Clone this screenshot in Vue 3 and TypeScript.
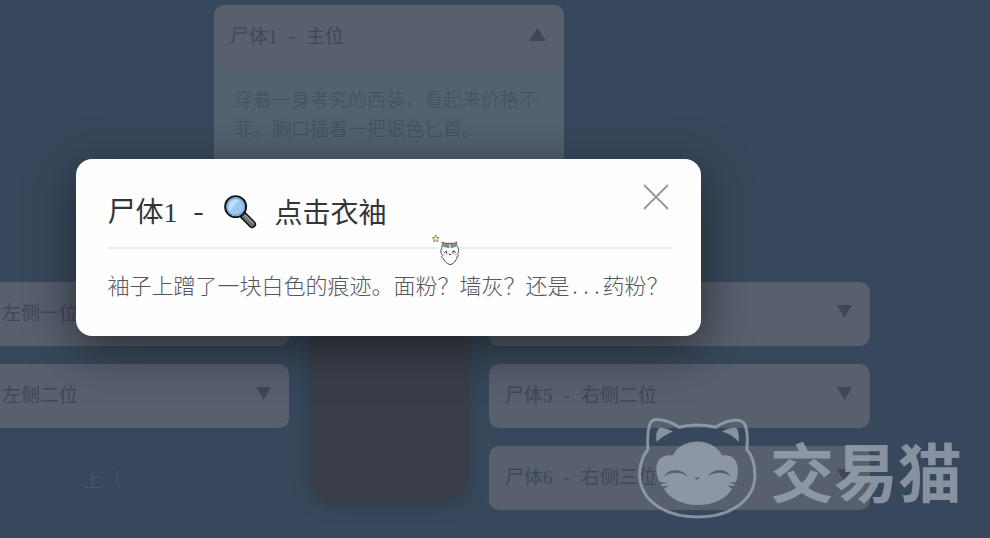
<script setup lang="ts">
import { ref } from 'vue'

interface Seat {
  id: number
  name: string
}

const leftSeats: Seat[] = [
  { id: 2, name: '左侧一位' },
  { id: 3, name: '左侧二位' },
]
const rightSeats: Seat[] = [
  { id: 4, name: '右侧一位' },
  { id: 5, name: '右侧二位' },
  { id: 6, name: '右侧三位' },
]
const open = ref(true)
</script>

<template>
  <div class="page">
    <main class="scene">
      <section class="card head-seat">
        <button class="seat" type="button">
          <span>尸体<span class="num">1</span> - 主位</span>
          <svg class="arrow" viewBox="0 0 18 14" aria-hidden="true"><path d="M9 0 18 14H0Z" /></svg>
        </button>
        <p class="detail">穿着一身考究的西装，看起来价格不菲。胸口插着一把银色匕首。</p>
      </section>

      <div class="room">
        <div class="column left">
          <section v-for="seat in leftSeats" :key="seat.id" class="card">
            <button class="seat" type="button">
              <span>尸体<span class="num">{{ seat.id }}</span> - {{ seat.name }}</span>
              <svg class="arrow small" viewBox="0 0 16 14" aria-hidden="true"><path d="M0 0H16L8 14Z" /></svg>
            </button>
          </section>
          <p class="hint">上（</p>
        </div>
        <div class="table-top"></div>
        <div class="column">
          <section v-for="seat in rightSeats" :key="seat.id" class="card">
            <button class="seat" type="button">
              <span>尸体<span class="num">{{ seat.id }}</span> - {{ seat.name }}</span>
              <svg class="arrow small" viewBox="0 0 16 14" aria-hidden="true"><path d="M0 0H16L8 14Z" /></svg>
            </button>
          </section>
        </div>
      </div>
    </main>

    <div v-if="open" class="overlay">
      <div class="modal" role="dialog" aria-labelledby="clue-title">
        <h2 id="clue-title" class="title">
          <span>尸体<span class="num">1</span> -</span>
          <svg class="lens" viewBox="0 0 36 36" aria-hidden="true">
            <path d="M20 21 30 31" stroke="#111317" stroke-width="8" stroke-linecap="round" />
            <path d="M22 23 30 31" stroke="#6e7074" stroke-width="5" stroke-linecap="round" />
            <path d="M23 22 31 30" stroke="#929499" stroke-width="1.5" stroke-linecap="round" />
            <circle cx="13" cy="13" r="10.8" fill="#9dc9ee" stroke="#111317" stroke-width="2" />
            <circle cx="13" cy="13" r="9" fill="none" stroke="#719dc4" stroke-width="1.2" />
            <path d="M6 15A8 8 0 0 1 16 6L7 18Z" fill="#bfdef7" />
          </svg>
          <span>点击衣袖</span>
        </h2>
        <p class="clue">袖子上蹭了一块白色的痕迹。面粉？墙灰？还是...药粉？</p>
        <button class="close" type="button" aria-label="关闭" @click="open = false">
          <svg viewBox="0 0 26 26" aria-hidden="true"><path d="M1 1 25 25M25 1 1 25" /></svg>
        </button>
      </div>
    </div>

    <svg class="pointer" viewBox="0 0 87 99" aria-hidden="true">
      <path d="M26 34H87V60L72 99H46L26 68Z" fill="#fefefe" />
      <path d="M17 9 20 16 27 17 22 22 24 29 17 26 11 29 12 22 7 17 14 16Z" fill="#fbf5a5" stroke="#77734a" stroke-width="2.4" />
      <path d="M36 48C34 46 35 42 37 40L37 30 45 34H73L80 30V40C87 49 87 61 82 68L86 71 80 75 81 80C77 83 75 91 68 95L60 98 52 94C46 90 42 85 40 80L34 74 38 70C31 64 31 55 36 48Z" fill="#fff" stroke="#3b3d42" stroke-width="2.8" />
      <path d="M37 31 45 36H54V48L36 44ZM64 36H72L80 31V44L66 48Z" fill="#819494" />
      <path d="M55 36V48M60 36V47M65 36V48" stroke="#657a79" stroke-width="3" />
      <path d="M43 62 49 57M50 58V65M67 58 73 57 77 62M69 58V65M56 66 60 69 64 66" fill="none" stroke="#303237" stroke-width="3" />
      <path d="M38 68H47M73 67H82" stroke="#f1b8c3" stroke-width="4" />
    </svg>

    <div class="watermark">
      <svg viewBox="20 34 364 310" aria-hidden="true">
        <path
          class="outline"
          d="M53 131C51 102 52 75 59 55 63 43 77 40 94 43 114 46 131 54 147 65 181 56 223 56 257 65 278 50 301 42 323 44 341 45 346 55 349 71 353 91 353 110 350 131 368 151 375 178 375 211 373 286 300 335 203 335 107 335 31 288 28 211 27 180 35 154 53 131Z"
        />
        <path class="fill" d="M79 109C76 92 78 76 87 67 98 65 114 71 128 78 108 86 91 97 79 109ZM276 78C290 70 306 65 319 67 326 77 328 93 326 109 312 94 296 84 276 78Z" />
        <path
          class="fill"
          fill-rule="evenodd"
          d="M127 150C142 123 168 108 202 108 237 108 262 124 276 150 303 145 320 160 323 185 325 202 322 216 318 230L294 233 314 236 311 242 292 240 306 250C288 281 250 299 203 299 158 299 119 281 101 250L117 240 96 243 91 236 113 233 88 229C77 207 75 185 82 170 90 154 106 147 127 150ZM102 213C122 199 151 198 172 213 161 190 113 186 102 213ZM234 213C254 198 283 199 301 213 289 186 247 189 234 213ZM191 216 201 223 211 216Z"
        />
      </svg>
      <span>交易猫</span>
    </div>
  </div>
</template>

<style>
body {
  margin: 0;
  background: #38485c;
}
</style>

<style scoped>
.page {
  position: relative;
  min-height: 100vh;
  box-sizing: border-box;
  padding-top: 5px;
  overflow: hidden;
  background: #38485c;
  font-family: 'Noto Sans CJK SC', 'Liberation Serif', serif;
  font-weight: 300;
  font-feature-settings: 'hwid';
}
.num {
  font-family: 'Liberation Serif', serif;
  font-weight: 400;
}
.scene {
  margin: 0 120px 0 -92px;
}
.card {
  border-radius: 10px;
  background: #585f6d;
  overflow: hidden;
}
.head-seat {
  width: 350px;
  height: 165px;
  margin: 0 auto;
  background: #526270;
}
.seat {
  display: flex;
  align-items: center;
  justify-content: space-between;
  width: 100%;
  height: 64px;
  padding: 0 18px 6px 16px;
  border: 0;
  background: #585f6d;
  color: #414758;
  font: inherit;
  font-size: 19px;
  font-weight: 400;
  font-feature-settings: inherit;
}
.left .seat {
  padding-left: 18px;
}
.arrow {
  width: 17px;
  height: 13px;
  fill: #444457;
}
.arrow.small {
  width: 15px;
}
.detail {
  margin: 0;
  padding: 15px 20px;
  color: #414f60;
  font-size: 19px;
  line-height: 29px;
  font-feature-settings: normal;
}
.room {
  display: grid;
  grid-template-columns: 381fr 160fr 381fr;
  gap: 20px;
  margin-top: 112px;
}
.column {
  display: flex;
  flex-direction: column;
  gap: 18px;
}
.hint {
  margin: 18px 0 0;
  padding-left: 8px;
  text-align: center;
  color: #4a586b;
  font-size: 19px;
  line-height: 29px;
  font-feature-settings: normal;
}
.table-top {
  margin-bottom: 8px;
  border-radius: 0 0 28px 28px;
  background: #393e49;
  box-shadow: 0 4px 16px #303e4a;
}
.overlay {
  position: absolute;
  inset: 0;
  display: flex;
  align-items: center;
  justify-content: center;
  padding: 0 214px 43px 0;
}
.modal {
  position: relative;
  box-sizing: border-box;
  width: 100%;
  max-width: 625px;
  padding: 32px;
  padding-right: 29px;
  border-radius: 16px;
  background: #fefefe;
  box-shadow: 0 12px 48px rgba(24, 28, 32, 0.75);
}
.title {
  display: flex;
  align-items: center;
  gap: 17px;
  height: 40px;
  margin: 0 0 17px;
  padding-bottom: 16px;
  border-bottom: 2px solid #ebecf1;
  color: #34353a;
  font-size: 28px;
  font-weight: 400;
  line-height: 40px;
}
.lens {
  width: 35px;
  height: 35px;
  fill: none;
}
.clue {
  margin: 0;
  padding-bottom: 2px;
  color: #56575b;
  font-size: 22px;
  line-height: 36px;
  white-space: nowrap;
}
.close {
  position: absolute;
  top: 25px;
  right: 32px;
  display: flex;
  padding: 0;
  border: 0;
  background: none;
}
.close svg {
  width: 26px;
  height: 26px;
  fill: none;
  stroke: #98999d;
  stroke-width: 2;
}
.pointer {
  position: absolute;
  left: 430px;
  top: 232px;
  width: 29px;
  height: 33px;
  fill: none;
}
.watermark {
  position: absolute;
  right: 28px;
  bottom: 18px;
  display: flex;
  align-items: center;
  gap: 12px;
  color: #9ba4b1;
  font-size: 64px;
  font-weight: 700;
  line-height: 96px;
  opacity: 0.8;
}
.watermark svg {
  width: 121px;
  height: 103px;
}
.outline {
  fill: none;
  stroke: #9ba4b1;
  stroke-width: 9;
}
.fill {
  fill: #9ba4b1;
}
</style>
